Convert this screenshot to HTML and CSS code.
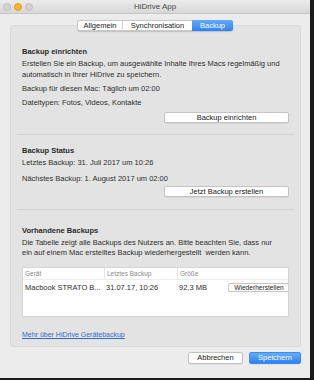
FILE: index.html
```html
<!DOCTYPE html>
<html lang="de">
<head>
	<meta charset="UTF-8">
	<title>HiDrive App</title>
	<link rel="stylesheet" href="styles.css">
</head>
<body>
	<div id="window">
		<div class="titlebar">
			<div class="lights">
				<span class="light"></span>
				<span class="light yellow"></span>
				<span class="light"></span>
			</div>
			<div class="title">HiDrive App</div>
			<div></div>
		</div>

		<div class="tabs">
			<div class="tab">Allgemein</div>
			<div class="tab">Synchronisation</div>
			<div class="tab current">Backup</div>
		</div>

		<div class="panel">
			<div class="section first">
				<h2>Backup einrichten</h2>
				<p class="desc">Erstellen Sie ein Backup, um ausgewählte Inhalte Ihres Macs regelmäßig und automatisch in Ihrer HiDrive zu speichern.</p>
				<p class="line l3">Backup für diesen Mac: Täglich um 02:00</p>
				<p class="line l3">Dateitypen: Fotos, Videos, Kontakte</p>
				<div class="actions a1"><div class="btn wide">Backup einrichten</div></div>
			</div>

			<div class="section status">
				<h2>Backup Status</h2>
				<p class="line l1">Letztes Backup: 31. Juli 2017 um 10:26</p>
				<p class="line l5">Nächstes Backup: 1. August 2017 um 02:00</p>
				<div class="actions a2"><div class="btn wide">Jetzt Backup erstellen</div></div>
			</div>

			<div class="section backups">
				<h2>Vorhandene Backups</h2>
				<p class="desc small">Die Tabelle zeigt alle Backups des Nutzers an. Bitte beachten Sie, dass nur ein auf einem Mac erstelltes Backup wiederhergestellt&nbsp; werden kann.</p>
				<div class="table">
					<div class="row head">
						<div class="cell">Gerät</div>
						<div class="cell">Letztes Backup</div>
						<div class="cell">Größe</div>
						<div class="cell"></div>
					</div>
					<div class="row">
						<div class="cell">Macbook STRATO B...</div>
						<div class="cell">31.07.17, 10:26</div>
						<div class="cell">92,3 MB</div>
						<div class="cell"><div class="btn small">Wiederherstellen</div></div>
					</div>
				</div>
				<a class="more" href="#">Mehr über HiDrive Gerätebackup</a>
			</div>
		</div>

		<div class="footer">
			<div class="btn cancel">Abbrechen</div>
			<div class="btn primary">Speichern</div>
		</div>
	</div>
</body>
</html>
```

FILE: styles.css
```css
* {margin: 0; padding: 0; box-sizing: border-box;}
body {background: #1b1b1b; width: 314px; height: 380px; overflow: hidden; font-family: "Liberation Sans", Arial, sans-serif; font-size: 7.5px; color: #2e2e2e;}
#window {width: 310px; height: 378px; background: #ececec; display: flex; flex-direction: column;}

.titlebar {height: 14px; display: grid; grid-template-columns: 1fr auto 1fr; align-items: center; background: linear-gradient(#ebebeb, #d8d8d8); border-bottom: 1px solid #c6c6c6;}
.lights {display: flex; gap: 3px; padding-left: 3px;}
.light {width: 8px; height: 8px; border-radius: 50%; background: #d2d2d2; border: 1px solid #c0c0c0;}
.light.yellow {background: #f6b52a; border-color: #e0a020;}
.title {font-size: 8px; color: #4a4a4a; line-height: 13px;}

.tabs {display: flex; align-self: center; margin-top: 6px; height: 11px; position: relative; z-index: 1; background: #fff; border: 1px solid #c9c9c9; border-radius: 3px; box-shadow: 0 0.5px 1px rgba(0,0,0,0.15);}
.tab {line-height: 9px; padding: 0 5px; color: #222; border-left: 1px solid #d6d6d6;}
.tab:first-child {border-left: 0; width: 44px; text-align: center;}
.tab:nth-child(2) {width: 70px; text-align: center;}
.tab.current {width: 41px; text-align: center; color: #fff; background: linear-gradient(#64aafc, #2f82f6); border-left: 0; border-radius: 0 2px 2px 0; margin: -1px -1px -1px 0; line-height: 11px;}

.panel {margin: -6px 9px 0 10px; height: 322px; background: #e3e3e3; border: 1px solid #dadada; border-radius: 3px; padding: 0 6px;}
.section {padding: 0 5px;}
.section + .section {border-top: 1px solid #d2d2d2;}
.section.first {padding-top: 20px; padding-bottom: 11px;}
.section.status {padding-top: 10px; padding-bottom: 12px;}
.section.backups {padding-top: 15px;}

h2 {font-size: 7.5px; font-weight: bold; line-height: 11px; color: #2a2a2a;}
.desc {line-height: 11px; margin-top: 1px;}
.desc.small {line-height: 10px; margin-top: 2px; max-width: 262px;}
.line {line-height: 11px;}
.l1 {margin-top: 1px;}
.l3 {margin-top: 3px;}
.l5 {margin-top: 5px;}

.actions {display: flex; justify-content: flex-end;}
.a1 {margin-top: 4px;}
.a2 {margin-top: 2px;}
.btn {background: #fff; border: 1px solid #c4c4c4; border-radius: 2px; text-align: center; box-shadow: 0 0.5px 0.5px rgba(0,0,0,0.12); color: #222;}
.btn.wide {width: 125px; height: 11px; line-height: 9px;}
.btn.small {width: 62px; height: 9px; line-height: 7px; margin-left: 2px; font-size: 6.6px; overflow: hidden;}

.table {margin-top: 9px; height: 50px; background: #fff; border: 1px solid #d6d6d6;}
.row {display: grid; grid-template-columns: 81px 73px 47px 1fr; align-items: center;}
.row.head {height: 12px; border-bottom: 1px solid #ececec; color: #8a8a8a; font-size: 6.5px;}
.row.head .cell + .cell {border-left: 1px solid #e6e6e6;}
.row.head .cell {line-height: 11px;}
.row:not(.head) {height: 14px;}
.cell {padding-left: 2px; white-space: nowrap; overflow: hidden;}

.more {display: block; margin-top: 12px; line-height: 11px; color: #2f6cc9; text-decoration: underline; font-size: 7px;}

.footer {display: flex; justify-content: flex-end; gap: 6px; margin: 5px 9px 0 0;}
.footer .btn {height: 12px; line-height: 10px;}
.btn.cancel {width: 55px;}
.btn.primary {width: 52px; color: #fff; border-color: #3d8af5; background: linear-gradient(#66abfc, #2f81f6);}
```
